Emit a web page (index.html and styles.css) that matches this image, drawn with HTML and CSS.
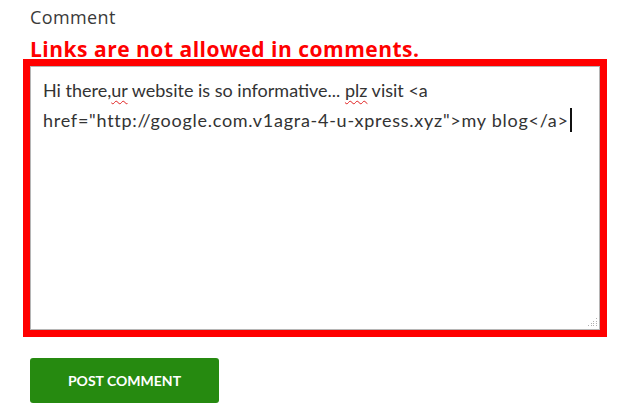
FILE: index.html
```html
<!DOCTYPE html>
<html lang="en">
<head>
<meta charset="utf-8">
<title>Comment</title>
<link rel="stylesheet" href="styles.css">
</head>
<body>
<form class="comment-form">
  <label class="field-label">Comment</label>
  <p class="field-error">Links are not allowed in comments.</p>
  <div class="textbox">
    <div class="textbox-text">Hi there,<span class="misspelled">ur</span> website is so informative... <span class="misspelled">plz</span> visit &lt;a<br><span class="line-two">href="http://google.com.v1agra-4-u-xpress.xyz"&gt;my blog&lt;/a&gt;</span><span class="caret"></span></div>
    <svg class="grip" width="10" height="10" viewBox="0 0 10 10" aria-hidden="true">
      <rect x="8" y="0" width="1" height="1"/>
      <rect x="5" y="3" width="1" height="1"/>
      <rect x="8" y="3" width="1" height="1"/>
      <rect x="3" y="5" width="1" height="1"/>
      <rect x="5" y="5" width="1" height="1"/>
      <rect x="8" y="5" width="1" height="1"/>
      <rect x="0" y="7" width="1" height="1"/>
      <rect x="3" y="7" width="1" height="1"/>
      <rect x="5" y="7" width="1" height="1"/>
      <rect x="8" y="7" width="1" height="1"/>
    </svg>
  </div>
  <button type="button" class="submit">Post Comment</button>
</form>
</body>
</html>
```
FILE: styles.css
```css
html, body {
  margin: 0;
  padding: 0;
  background: #ffffff;
}

.comment-form {
  display: flex;
  flex-direction: column;
  align-items: flex-start;
  padding: 5px 0 0 30px;
}

.field-label {
  font-family: "Open Sans", "Liberation Sans", sans-serif;
  font-size: 18px;
  line-height: 25px;
  height: 25px;
  color: #3a3a3a;
  letter-spacing: 0.4px;
}

.field-error {
  margin: 7px 0 0 0;
  font-family: "Open Sans", "Liberation Sans", sans-serif;
  font-weight: 700;
  font-size: 21px;
  line-height: 24px;
  height: 24px;
  color: #ff0000;
  letter-spacing: 0.5px;
}

.textbox {
  position: relative;
  box-sizing: border-box;
  width: 570px;
  height: 264px;
  margin-top: 5px;
  border: 1px solid #b5b5b5;
  outline: 7px solid #ff0000;
  background: #ffffff;
  padding: 8px 12px;
}

.textbox-text {
  font-family: Lato, "Liberation Sans", sans-serif;
  font-size: 18px;
  line-height: 30px;
  color: #333333;
}

.line-two {
  letter-spacing: 0.74px;
}

.misspelled {
  text-decoration: underline wavy #e02020;
  text-decoration-thickness: 1px;
  text-underline-offset: 3px;
}

.caret {
  display: inline-block;
  width: 2px;
  height: 24px;
  margin-left: 1px;
  background: #111111;
  vertical-align: -5px;
}

.grip {
  position: absolute;
  right: 1px;
  bottom: 1px;
  fill: #b0b0b0;
}

.submit {
  margin-top: 28px;
  width: 189px;
  height: 45px;
  border: none;
  border-radius: 3px;
  background: #268a10;
  color: #ffffff;
  font-family: Lato, "Liberation Sans", sans-serif;
  font-weight: 700;
  font-size: 14px;
  text-transform: uppercase;
  padding: 0;
}
```
